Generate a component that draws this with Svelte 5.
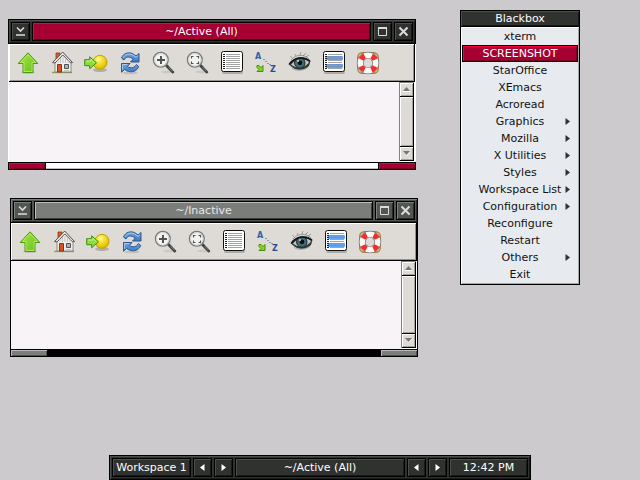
<script>
  const tools = [
    ['up', 'Parent directory'],
    ['home', 'Home'],
    ['jump', 'Jump to'],
    ['refresh', 'Refresh'],
    ['zoom', 'Change size'],
    ['fit', 'Resize to fit'],
    ['list', 'Show details'],
    ['sort', 'Sort'],
    ['eye', 'Show hidden'],
    ['select', 'Select'],
    ['help', 'Help']
  ];

  const windows = [
    { title: '~/Active (All)', kind: 'active' },
    { title: '~/Inactive', kind: 'inactive' }
  ];

  const menu = [
    { label: 'xterm' },
    { label: 'SCREENSHOT' },
    { label: 'StarOffice' },
    { label: 'XEmacs' },
    { label: 'Acroread' },
    { label: 'Graphics', sub: true },
    { label: 'Mozilla', sub: true },
    { label: 'X Utilities', sub: true },
    { label: 'Styles', sub: true },
    { label: 'Workspace List', sub: true },
    { label: 'Configuration', sub: true },
    { label: 'Reconfigure' },
    { label: 'Restart' },
    { label: 'Others', sub: true },
    { label: 'Exit' }
  ];

  let selected = $state('SCREENSHOT');
</script>

{#snippet tri(dir)}
  <svg class="tri" width="5" height="7" viewBox="0 0 5 7" aria-hidden="true">
    <path d={dir === 'left' ? 'M4.5 0v7L0 3.5z' : 'M0.5 0v7L5 3.5z'} fill="currentColor" />
  </svg>
{/snippet}

{#snippet magnifier()}
  <ellipse cx="16" cy="21" rx="7" ry="1.5" fill="#000" opacity=".08" />
  <path d="M14.5 14.5l6.3 6.6" stroke="#3f4240" stroke-width="2.8" stroke-linecap="round" />
  <path d="M16.5 16l4 4.3" stroke="#81847f" stroke-width="1" />
  <circle cx="8.8" cy="8.8" r="7.4" fill="#f3f3f1" stroke="#777a77" stroke-width="1.3" />
  <circle cx="8.8" cy="8.8" r="6.2" fill="none" stroke="#d2d4d0" stroke-width="1" />
{/snippet}

{#snippet page(highlight)}
  <rect x="2" y="2" width="21" height="21" rx="2" fill="#000" opacity=".22" />
  <rect x="1.5" y="0.5" width="21" height="20" rx="2" fill="#fff" stroke="#111" />
  {#if highlight}
    <rect x="3.5" y="5" width="17.5" height="4" rx="1" fill="#65a3ee" />
    <rect x="3.5" y="13" width="17.5" height="4" rx="1" fill="#65a3ee" />
  {/if}
  {#each [3, 5, 7, 9, 11, 13, 15, 17] as y}
    <path d="M3 {y}.5h2" stroke="#222" />
    <path d="M6 {y}.5h14" stroke={highlight && [5, 7, 13, 15].includes(y) ? '#6d94c6' : '#a3a3a3'} />
  {/each}
{/snippet}

{#snippet icon(name)}
  <svg width="24" height="24" viewBox="0 0 24 24" fill="none" aria-hidden="true">
    {#if name === 'up'}
      <ellipse cx="12" cy="21.5" rx="7" ry="1.5" fill="#000" opacity=".15" />
      <path d="M12 1.8L21.8 12.5h-4.8v9h-10v-9H2.2z" fill="url(#green)" stroke="#4d9a0b" stroke-linejoin="round" />
      <path d="M12 3.5L19.5 11.5h-3.5v9h-8v-9H4.5z" stroke="#b9ef6d" opacity=".8" />
    {:else if name === 'home'}
      <path d="M2 21.5h20" stroke="#8da252" stroke-width="1.4" />
      <path d="M6 2h4v7H6z" fill="#d95d28" stroke="#96360f" stroke-width=".8" />
      <path d="M5 10L13 2l8 8v11H5z" fill="#eeeeec" stroke="#777" stroke-width=".8" />
      <path d="M2.5 11.5L12.7 1l9.8 10.5-2 .3L12.8 4 5 12z" fill="#e5e5e5" stroke="#444" stroke-width=".9" />
      <path d="M8 9v3M10.5 7v5M13 6v6M15.5 7v5M18 9v3" stroke="#c4c4c4" />
      <path d="M7.5 13.5h4v7.5h-4z" fill="#d55221" stroke="#8b3310" />
      <path d="M14.5 13.5h4v4h-4z" fill="#a1b4c2" stroke="#555" />
      <path d="M14 19.5h5" stroke="#c6c6bd" />
    {:else if name === 'jump'}
      <ellipse cx="16" cy="19" rx="7" ry="2" fill="#000" opacity=".2" />
      <circle cx="16" cy="11.3" r="7" fill="url(#gold)" stroke="#c6a200" />
      <path d="M.7 8.7h5V5.8l6.8 6-6.8 6v-3.1h-5z" fill="#8bdd43" stroke="#418c0b" stroke-linejoin="round" />
      <path d="M2 10h5V8.5l3.5 3.3" stroke="#c5f58e" />
    {:else if name === 'refresh'}
      <ellipse cx="12" cy="22" rx="8" ry="1.3" fill="#000" opacity=".12" />
      <path d="M3.5 7C5.5 2 10.5 1 14.5 2.5L18 5l3-2.5V11h-8.5l2.8-3C11 5 7.5 5.5 6 9z" fill="url(#blue)" stroke="#2c5790" stroke-linejoin="round" />
      <path d="M20.7 15.5c-1.7 5-7.2 6.5-12 4.3L6.5 18.5l-3 2.7V12.5H12l-2.6 3c3.5 2.4 7 1.3 9-2z" fill="url(#blue)" stroke="#2c5790" stroke-linejoin="round" />
      <path d="M5 7C7 3 11 2.5 14.5 3.8L18 6.3l2-1.7M4.5 19v-5.5H9" stroke="#b5d5f5" stroke-width=".8" />
    {:else if name === 'zoom'}
      {@render magnifier()}
      <path d="M9 5v8M5 9h8" stroke="#505350" stroke-width="2" />
    {:else if name === 'fit'}
      {@render magnifier()}
      <path d="M5.5 7.5v-2h2M10.5 5.5h2v2M12.5 10.5v2h-2M7.5 12.5h-2v-2" stroke="#505350" stroke-width="1.1" />
    {:else if name === 'list'}
      {@render page(false)}
    {:else if name === 'select'}
      {@render page(true)}
    {:else if name === 'sort'}
      <text x="1" y="8" fill="#2c62a8">A</text>
      <text x="16" y="21" fill="#244f91">Z</text>
      <path d="M9.5 8h1v1h-1zM11.5 10h1v1h-1zM13.5 12h1v1h-1zM15.5 13h1v1h-1z" fill="#315a91" />
      <path d="M3 14.5h2l2 2 2-2v6H3l2-2-2-2z" fill="#83d61c" stroke="#469009" />
    {:else if name === 'eye'}
      <path d="M3 9C8 3 16 3 21 8M4 7L2.5 5M8 5L7 3M12 4l1-3M15 5l3-3M18 6l3-2" stroke="#555" stroke-width=".7" opacity=".7" />
      <path d="M1 13C5 6 16 3 22.5 10L21 15c-5 5-14 5-19-.5z" fill="#343834" />
      <path d="M3 13.5C8 8 16 7 21 11c-3 6-13 7.5-18 2.5z" fill="#c2c7c6" />
      <circle cx="11.8" cy="12" r="5.2" fill="#456b77" stroke="#172b30" />
      <circle cx="12" cy="11.8" r="2.4" fill="#0b1012" />
      <circle cx="10" cy="10" r="1.1" fill="#bad0d6" />
      <path d="M1 13.5C5 7 15 5 22 10" stroke="#111" stroke-width="1.3" />
      <path d="M4 17.5c5 3 12 2 16-1" stroke="#777" opacity=".5" />
    {:else if name === 'help'}
      <rect x="1.7" y="1.7" width="20.6" height="20.6" rx="4.5" stroke="#b28339" stroke-width="1.4" />
      <circle cx="12" cy="12" r="7.8" stroke="#777" stroke-width="6.8" />
      <circle cx="12" cy="12" r="7.8" stroke="#f9f9f7" stroke-width="5.4" />
      <circle cx="12" cy="12" r="7.8" stroke="#f02f2a" stroke-width="5.4" stroke-dasharray="5 7.25" stroke-dashoffset="-3.6" />
    {/if}
  </svg>
{/snippet}

<svg class="defs" width="0" height="0" aria-hidden="true">
  <defs>
    <linearGradient id="green" x1="0" y1="0" x2="1" y2="1"><stop stop-color="#a4e849" /><stop offset="1" stop-color="#67bc1c" /></linearGradient>
    <linearGradient id="blue" x1="0" y1="0" x2="0" y2="1"><stop stop-color="#76a8df" /><stop offset="1" stop-color="#3d76bd" /></linearGradient>
    <radialGradient id="gold" cx=".4" cy=".3" r=".7"><stop stop-color="#fffbb0" /><stop offset=".35" stop-color="#f8e43a" /><stop offset="1" stop-color="#dfb800" /></radialGradient>
  </defs>
</svg>

<main class="desktop">
  {#each windows as win}
    <section class="window {win.kind}" aria-label={win.title}>
      <header class="frame titlebar">
        <button class="cell square" aria-label="Iconify">
          <svg width="11" height="11" viewBox="0 0 11 11"><path d="M2 1.5l3.5 3.5L9 1.5M1 9h9" fill="none" stroke="currentColor" stroke-width="1.6" /></svg>
        </button>
        <h2 class="cell title">{win.title}</h2>
        <button class="cell square" aria-label="Maximize">
          <svg width="11" height="11" viewBox="0 0 11 11"><path d="M1.5 1v8.5h8V1" fill="none" stroke="currentColor" /><path d="M1 2h9" stroke="currentColor" stroke-width="2" /></svg>
        </button>
        <button class="cell square" aria-label="Close">
          <svg width="11" height="11" viewBox="0 0 11 11"><path d="M1.5 1.5l8 8M9.5 1.5l-8 8" fill="none" stroke="currentColor" stroke-width="2" /></svg>
        </button>
      </header>
      <div class="client">
        <div class="tools" role="toolbar" aria-label="Tools">
          {#each tools as [name, label]}
            <button class="tool" aria-label={label}>{@render icon(name)}</button>
          {/each}
        </div>
        <div class="view">
          <div class="files"></div>
          <div class="scroll">
            <button aria-label="Scroll up"><svg width="7" height="5" viewBox="0 0 7 5"><path d="M3.5 0L7 4H0z" fill="#777" /><path d="M0 4.5h7" stroke="#fff" /></svg></button>
            <div class="thumb"></div>
            <button aria-label="Scroll down"><svg width="7" height="5" viewBox="0 0 7 5"><path d="M1 1h6L4 5z" fill="#fff" /><path d="M0 0h7L3.5 4z" fill="#777" /></svg></button>
          </div>
        </div>
      </div>
      <footer><i class="grip"></i><i class="handle"></i><i class="grip"></i></footer>
    </section>
  {/each}

  <nav class="menu" aria-label="Blackbox">
    <h2>Blackbox</h2>
    <ul>
      {#each menu as item}
        <li>
          <button class:selected={selected === item.label} onclick={() => (selected = item.label)}>
            <span>{item.label}</span>
            {#if item.sub}{@render tri('right')}{/if}
          </button>
        </li>
      {/each}
    </ul>
  </nav>

  <div class="frame taskbar">
    <span class="cell info">Workspace 1</span>
    <button class="cell square" aria-label="Previous workspace">{@render tri('left')}</button>
    <button class="cell square" aria-label="Next workspace">{@render tri('right')}</button>
    <span class="cell title">~/Active (All)</span>
    <button class="cell square" aria-label="Previous window">{@render tri('left')}</button>
    <button class="cell square" aria-label="Next window">{@render tri('right')}</button>
    <span class="cell info">12:42 PM</span>
  </div>
</main>

<style>
  :global(body) {
    margin: 0;
    background: #cdcacd;
  }
  * {
    box-sizing: border-box;
  }
  .defs {
    position: absolute;
  }
  .desktop {
    position: relative;
    min-height: 100vh;
    overflow: hidden;
    font: 11px/15px 'DejaVu Sans', sans-serif;
    color: #fff;
  }
  button,
  h2 {
    margin: 0;
    padding: 0;
    border: 0;
    font: inherit;
    color: inherit;
    background: none;
  }
  svg {
    display: block;
    flex: none;
  }

  .frame {
    display: flex;
    gap: 2px;
    padding: 2px;
    border: 1px solid #000;
    background: #2f322f;
    box-shadow: inset 1px 1px #4b4f4b, inset -1px -1px #181a18;
  }
  .cell {
    display: flex;
    align-items: center;
    justify-content: center;
    height: 19px;
    border: 1px solid #000;
    background: #2f322f;
    box-shadow: inset 1px 1px #4b4f4b, inset -1px -1px #181a18;
    white-space: nowrap;
  }
  .square {
    flex: none;
    width: 19px;
  }
  .title {
    flex: 1;
    font-weight: normal;
  }
  .info {
    flex: none;
    width: 79px;
  }

  .window {
    position: absolute;
    width: 408px;
  }
  .active {
    left: 8px;
    top: 19px;
  }
  .inactive {
    left: 10px;
    top: 198px;
  }
  .titlebar .square {
    color: #dedbde;
  }
  .active h2 {
    background: #a50031;
    box-shadow: inset 1px 1px #f5003f, inset -1px -1px #520018;
  }
  .inactive .titlebar,
  .inactive .square {
    background: #525652;
    box-shadow: inset 1px 1px #7b817b, inset -1px -1px #292b29;
  }
  .inactive h2 {
    background: #7b7d7b;
    box-shadow: inset 1px 1px #b9bcb9, inset -1px -1px #3d3e3d;
    color: #e7e7e7;
  }

  .client {
    border: solid #fff;
    border-width: 0 1px;
  }
  .inactive .client {
    border-color: #000;
  }
  .tools {
    display: flex;
    height: 38px;
    padding: 0 2px;
    border: solid #000;
    border-width: 0 1px 1px 0;
    background: #dedbd6;
    box-shadow: inset 1px 1px #fff, inset -1px -1px #94928c;
  }
  .tool {
    display: flex;
    align-items: center;
    justify-content: center;
    flex: none;
    width: 34px;
    height: 38px;
  }
  .tool text {
    font: bold 8px 'DejaVu Sans', sans-serif;
  }
  .view {
    display: flex;
    height: 80px;
    padding: 0 1px 1px 0;
    background: #fff;
  }
  .inactive .view {
    height: 88px;
  }
  .files {
    flex: 1;
    margin-bottom: -1px;
    background: #f7f3f7;
  }
  .scroll {
    display: flex;
    flex-direction: column;
    width: 15px;
    border: solid #84827c;
    border-width: 1px 0 0 1px;
  }
  .scroll button,
  .thumb {
    border: solid #000;
    border-width: 0 1px 1px 0;
    background: #dedbd6;
    box-shadow: inset 1px 1px #fff, inset -1px -1px #a5a29c;
  }
  .scroll button {
    display: flex;
    align-items: center;
    justify-content: center;
    height: 14px;
  }
  .thumb {
    flex: 1;
  }

  footer {
    display: flex;
    height: 8px;
  }
  .grip,
  .handle {
    border: 1px solid #000;
  }
  .grip {
    width: 38px;
    background: #a50031;
    box-shadow: inset 1px 1px #f5003f, inset -1px -1px #7b0025;
  }
  .handle {
    flex: 1;
    border-width: 1px 0;
    background: #fff;
    box-shadow: inset 0 -1px #bdbebd;
  }
  .inactive .grip {
    background: #7b7d7b;
    box-shadow: inset 1px 1px #b9bcb9, inset -1px -1px #525352;
  }
  .inactive .handle {
    background: #000;
    box-shadow: none;
  }

  .menu {
    position: absolute;
    left: 460px;
    top: 10px;
    width: 120px;
    border: 1px solid #000;
    background: #e7ebef;
    color: #111;
  }
  .menu h2 {
    height: 16px;
    border-bottom: 1px solid #000;
    background: #2f322f;
    box-shadow: inset 1px 1px #4b4f4b, inset -1px -1px #181a18;
    color: #fff;
    font-weight: normal;
    text-align: center;
  }
  .menu ul {
    margin: 0;
    padding: 1px;
    list-style: none;
    box-shadow: inset 1px 1px #fff, inset -1px -1px #a5a8ab;
  }
  .menu button {
    display: grid;
    grid-template-columns: 12px 1fr 12px;
    align-items: center;
    width: 100%;
    height: 17px;
    border: 1px solid transparent;
    white-space: nowrap;
  }
  .menu span {
    grid-column: 2;
    justify-self: center;
  }
  .menu .tri {
    justify-self: start;
    color: #2f322f;
  }
  .menu .selected {
    border-color: #000;
    background: #a50031;
    box-shadow: inset 1px 1px #f5003f, inset -1px -1px #7b0025;
    color: #fff;
  }

  .taskbar {
    position: absolute;
    bottom: 0;
    left: 0;
    right: 0;
    width: round(down, 66vw, 2px);
    margin: 0 auto;
  }
</style>
